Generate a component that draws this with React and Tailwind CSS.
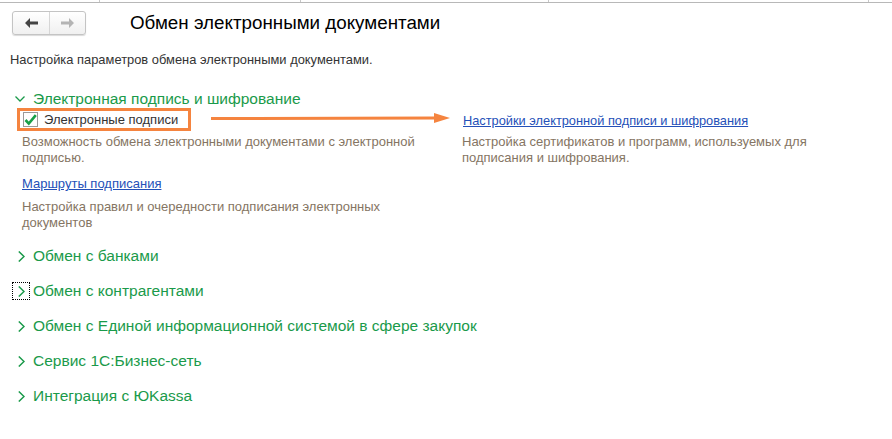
import React from "react";

const font = { fontFamily: '"Liberation Sans", Arial, sans-serif' };

// chevron for opened / closed groups
const Chevron = ({ open }) =>
  open ? (
    <svg width="10" height="6" viewBox="0 0 10 6" className="shrink-0">
      <path d="M0.5 0.5 L5 5 L9.5 0.5" fill="none" stroke="#1a9a4a" strokeWidth="1.3" />
    </svg>
  ) : (
    <svg width="7" height="11" viewBox="0 0 7 11" className="shrink-0">
      <path d="M0.8 0.5 L6 5.5 L0.8 10.5" fill="none" stroke="#1a9a4a" strokeWidth="1.5" />
    </svg>
  );

const Group = ({ title, focused }) => (
  <div className="flex items-center h-[20px]">
    <div
      className={
        "w-[18px] h-[18px] flex items-center justify-center ml-[12px] mr-[3px] " +
        (focused ? "border border-dotted border-black" : "")
      }
    >
      <Chevron />
    </div>
    <span className="text-[15.5px] text-[#1a9a4a] leading-[20px]">{title}</span>
  </div>
);

export default function App() {
  return (
    <div className="relative w-[892px] h-[439px] bg-white overflow-hidden" style={font}>
      {/* tail of a table above */}
      <div className="flex h-[3px] border-b border-[#b8b8b8]">
        <div className="w-[100px] border-r border-[#c8c8c8]" />
        <div className="w-[201px] border-r border-[#c8c8c8]" />
        <div className="w-[248px] border-r border-[#c8c8c8]" />
        <div className="w-[320px] border-r border-[#c8c8c8]" />
      </div>

      {/* header */}
      <div className="flex items-center mt-[8px] h-[24px]">
        <div className="flex ml-[12px] w-[74px] h-[24px] border border-[#c4c4c4] rounded-[3px] bg-gradient-to-b from-white to-[#f0f0f0] shadow-[0_1px_1px_rgba(0,0,0,0.15)]">
          <div className="w-[37px] flex items-center justify-center border-r border-[#d6d6d6]">
            <svg width="13" height="10" viewBox="0 0 13 10">
              <path d="M0 5 L5 0 L5 3.5 L13 3.5 L13 6.5 L5 6.5 L5 10 Z" fill="#444" />
            </svg>
          </div>
          <div className="flex-1 flex items-center justify-center">
            <svg width="13" height="10" viewBox="0 0 13 10">
              <path d="M13 5 L8 0 L8 3.5 L0 3.5 L0 6.5 L8 6.5 L8 10 Z" fill="#b4b4b4" />
            </svg>
          </div>
        </div>
        <h1 className="ml-[44px] text-[18.8px] text-black leading-[24px]">Обмен электронными документами</h1>
      </div>

      <p className="mt-[17px] ml-[10px] text-[12.9px] leading-[16px] text-[#333]">
        Настройка параметров обмена электронными документами.
      </p>

      {/* opened group */}
      <div className="flex items-center mt-[22px] h-[18px]">
        <div className="ml-[15px] mr-[8px] flex items-center">
          <Chevron open />
        </div>
        <span className="text-[15.5px] text-[#1a9a4a] leading-[18px]">Электронная подпись и шифрование</span>
      </div>

      <div className="flex">
        {/* left column */}
        <div className="ml-[17px] w-[430px]">
          <div className="flex items-center w-[174px] h-[23px] border-[3px] border-[#f5843f]">
            <div className="ml-[3px] w-[15px] h-[15px] border border-[#9a9a9a] bg-white flex items-center justify-center">
              <svg width="13" height="12" viewBox="0 0 13 12">
                <path d="M1.5 6 L4.8 9.6 L11.8 1.2" fill="none" stroke="#18a048" strokeWidth="2.6" />
              </svg>
            </div>
            <span className="ml-[6px] text-[13px] text-[#333] leading-[16px]">Электронные подписи</span>
          </div>
          <div className="ml-[5px] pr-[20px]">
            <p className="mt-[3px] text-[13px] leading-[16px] text-[#857563]">
              Возможность обмена электронными документами с электронной подписью.
            </p>
            <a className="block mt-[10px] text-[13px] leading-[16px] text-[#2450b8] underline">
              Маршруты подписания
            </a>
            <p className="mt-[7px] text-[13px] leading-[16px] text-[#857563]">
              Настройка правил и очередности подписания электронных документов
            </p>
          </div>
        </div>

        {/* right column */}
        <div className="ml-[15px] w-[370px]">
          <a className="block mt-[5px] ml-[1px] text-[12.8px] leading-[16px] text-[#2450b8] underline">
            Настройки электронной подписи и шифрования
          </a>
          <p className="mt-[5px] text-[13px] leading-[16px] text-[#857563]">
            Настройка сертификатов и программ, используемых для подписания и шифрования.
          </p>
        </div>
      </div>

      {/* annotation arrow */}
      <svg className="absolute left-[210px] top-[112px]" width="242" height="12" viewBox="0 0 242 12">
        <path d="M1 6.5 L226 6" stroke="#f5843f" strokeWidth="3" />
        <path d="M224 1 L240 6 L224 11 Z" fill="#f5843f" />
      </svg>

      {/* collapsed groups */}
      <div className="flex flex-col gap-[15px] mt-[15px]">
        <Group title="Обмен с банками" />
        <Group title="Обмен с контрагентами" focused />
        <Group title="Обмен с Единой информационной системой в сфере закупок" />
        <Group title="Сервис 1С:Бизнес-сеть" />
        <Group title="Интеграция с ЮKassa" />
      </div>
    </div>
  );
}
